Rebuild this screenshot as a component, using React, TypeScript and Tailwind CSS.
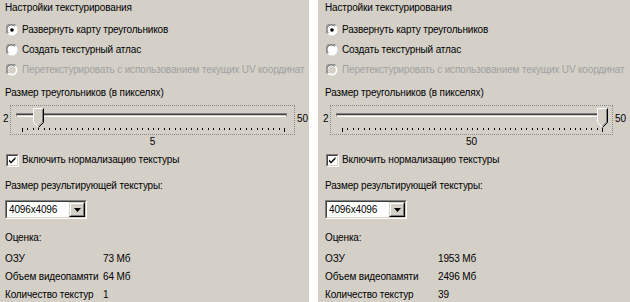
const FONT = "font-['Liberation_Sans',Arial,sans-serif]";

function Radio({ checked, disabled }: { checked?: boolean; disabled?: boolean }) {
  return (
    <svg width="12" height="12" viewBox="0 0 12 12" className="shrink-0">
      <circle cx="6" cy="6" r="5.5" fill="#ffffff" />
      <path d="M1.2 9.6 A5.5 5.5 0 0 1 9.6 1.2" fill="none" stroke="#808080" strokeWidth="1" />
      <path d="M2.2 8.8 A4.5 4.5 0 0 1 8.8 2.2" fill="none" stroke="#404040" strokeWidth="1" />
      <circle cx="6" cy="6" r="3.8" fill={disabled ? "#d4d0c8" : "#ffffff"} />
      {checked && <circle cx="6" cy="6" r="1.8" fill="#000000" />}
    </svg>
  );
}

function Checkbox() {
  return (
    <div className="w-[13px] h-[13px] shrink-0 border border-t-[#808080] border-l-[#808080] border-r-white border-b-white">
      <div className="w-full h-full bg-white border border-t-[#404040] border-l-[#404040] border-r-[#d4d0c8] border-b-[#d4d0c8]">
        <svg width="9" height="9" viewBox="0 0 9 9">
          <path d="M1 3.5 L3 5.5 L7.5 1 L7.5 3 L3 7.5 L1 5.5 Z" fill="#000" />
        </svg>
      </div>
    </div>
  );
}

function Thumb() {
  return (
    <svg width="11" height="20" viewBox="0 0 11 20">
      <path d="M0.5 0.5 H10.5 V14.5 L5.5 19.5 L0.5 14.5 Z" fill="#d4d0c8" />
      <path d="M0.5 14.5 V0.5 H10" fill="none" stroke="#ffffff" />
      <path d="M10.5 0.5 V14.5 L5.5 19.5" fill="none" stroke="#000000" />
      <path d="M9.5 1.5 V14 L5.5 18" fill="none" stroke="#808080" />
      <path d="M0.5 14.5 L5 19" fill="none" stroke="#ffffff" />
    </svg>
  );
}

function Slider({ value, width }: { value: number; width: number }) {
  const tickStart = 11;
  const tickSpan = width - 23;
  const ticks = Array.from({ length: 49 }, (_, i) => tickStart + (i / 48) * tickSpan);
  const thumbX = tickStart + ((value - 2) / 48) * tickSpan;
  return (
    <div className="flex items-start">
      <div className="w-[10px] h-[30px] flex items-center pl-[3px] pb-[2px]">2</div>
      <div className="relative h-[30px] border border-dotted border-[#8a8a8a]" style={{ width }}>
        {/* groove */}
        <div className="absolute left-[5px] right-[7px] top-[7px] h-[4px] border-t border-t-[#808080] border-b border-b-white bg-[#404040] border-x border-x-[#808080]">
          <div className="h-[1px] mt-[1px] bg-[#d4d0c8]" />
        </div>
        {ticks.map((x, i) => (
          <div
            key={i}
            className="absolute top-[22px] w-px bg-black"
            style={{ left: Math.round(x), height: i === 0 || i === 48 ? 4 : 2 }}
          />
        ))}
        <div className="absolute top-[2px]" style={{ left: Math.round(thumbX) - 5 }}>
          <Thumb />
        </div>
      </div>
      <div className="h-[30px] flex items-center pl-[2px] pb-[2px]">50</div>
    </div>
  );
}

function Select() {
  return (
    <div className="w-[82px] h-[19px] border border-t-[#808080] border-l-[#808080] border-r-white border-b-white">
      <div className="h-full flex bg-white border border-t-[#404040] border-l-[#404040] border-r-[#d4d0c8] border-b-[#d4d0c8]">
        <div className="flex-1 pl-[2px] leading-[15px]">4096x4096</div>
        <div className="w-[16px] h-full bg-[#d4d0c8] border border-t-[#d4d0c8] border-l-[#d4d0c8] border-r-black border-b-black">
          <div className="h-full flex items-center justify-center border border-t-white border-l-white border-r-[#808080] border-b-[#808080]">
            <svg width="7" height="4" viewBox="0 0 7 4">
              <path d="M0 0 H7 L3.5 4 Z" fill="#000" />
            </svg>
          </div>
        </div>
      </div>
    </div>
  );
}

type PanelProps = {
  value: number;
  sliderWidth: number;
  valueCol: number;
  ram: string;
  vram: string;
  count: string;
  pad: number;
};

function Panel({ value, sliderWidth, valueCol, ram, vram, count, pad }: PanelProps) {
  const rows = [
    ["ОЗУ", ram],
    ["Объем видеопамяти", vram],
    ["Количество текстур", count],
  ];
  return (
    <div
      className="h-full bg-[#d4d0c8] text-black text-[10px] tracking-[-0.15px] leading-[14px] whitespace-nowrap overflow-hidden"
      style={{ paddingLeft: pad - 5 }}
    >
      <div className="flex flex-col">
        <div className="pl-[5px] mt-[1px] h-[14px]">Настройки текстурирования</div>
        <div className="pl-[6px] mt-[8px] h-[14px] flex items-center gap-[4px]">
          <Radio checked />
          <span>Развернуть карту треугольников</span>
        </div>
        <div className="pl-[6px] mt-[6px] h-[14px] flex items-center gap-[4px]">
          <Radio />
          <span>Создать текстурный атлас</span>
        </div>
        <div className="pl-[6px] mt-[6px] h-[14px] flex items-center gap-[4px] text-[#a0a0a0]">
          <Radio disabled />
          <span>Перетекстурировать с использованием текущих UV координат</span>
        </div>
        <div className="pl-[5px] mt-[9px] h-[14px]">Размер треугольников (в пикселях)</div>
        <div className="mt-[5px]">
          <Slider value={value} width={sliderWidth} />
        </div>
        <div className="h-[14px] text-center" style={{ width: sliderWidth + 20 }}>
          {value}
        </div>
        <div className="pl-[6px] mt-[4px] h-[14px] flex items-center gap-[3px]">
          <Checkbox />
          <span>Включить нормализацию текстуры</span>
        </div>
        <div className="pl-[5px] mt-[12px] h-[14px]">Размер результирующей текстуры:</div>
        <div className="pl-[5px] mt-[7px]">
          <Select />
        </div>
        <div className="pl-[5px] mt-[12px] h-[14px]">Оценка:</div>
        {rows.map(([label, val], i) => (
          <div key={label} className={`pl-[5px] h-[14px] flex ${i === 0 ? "mt-[7px]" : "mt-[4px]"}`}>
            <span className="shrink-0" style={{ width: valueCol }}>
              {label}
            </span>
            <span>{val}</span>
          </div>
        ))}
      </div>
    </div>
  );
}

export default function App() {
  return (
    <div className={`w-[630px] h-[302px] flex bg-white ${FONT}`}>
      <div className="w-[309px] h-full">
        <Panel value={5} sliderWidth={285} valueCol={98} ram="73 Мб" vram="64 Мб" count="1" pad={5} />
      </div>
      <div className="w-[9px] h-full bg-white" />
      <div className="w-[312px] h-full">
        <Panel value={50} sliderWidth={283} valueCol={113} ram="1953 Мб" vram="2496 Мб" count="39" pad={7} />
      </div>
    </div>
  );
}
